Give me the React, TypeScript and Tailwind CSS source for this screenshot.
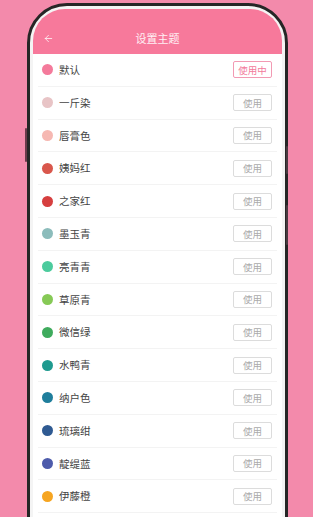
import { ArrowLeft } from "lucide-react";

const themes = [
  { name: "默认", color: "#f47a9b", active: true },
  { name: "一斤染", color: "#e8c4c6" },
  { name: "唇膏色", color: "#f6b8b2" },
  { name: "姨妈红", color: "#d9574c" },
  { name: "之家红", color: "#d63f3f" },
  { name: "墨玉青", color: "#8cbcbb" },
  { name: "亮青青", color: "#4ccb9d" },
  { name: "草原青", color: "#86c956" },
  { name: "微信绿", color: "#3fab5d" },
  { name: "水鸭青", color: "#1f9a8f" },
  { name: "纳户色", color: "#1f7e9c" },
  { name: "琉璃绀", color: "#2f5a92" },
  { name: "靛缇蓝", color: "#4d5bab" },
  { name: "伊藤橙", color: "#f6a521" },
];

const App = () => {
  return (
    <div
      className="relative w-[313px] h-[517px] overflow-hidden bg-[#f38aab]"
      style={{ fontFamily: '"Noto Sans CJK SC", "Noto Sans", sans-serif' }}
    >
      {/* side buttons */}
      <div className="absolute left-[25px] top-[128px] w-[2px] h-[34px] rounded bg-[#6b3a4a]" />
      <div className="absolute left-[286px] top-[146px] w-[2px] h-[28px] rounded bg-[#4a3a40]" />
      <div className="absolute left-[286px] top-[205px] w-[2px] h-[40px] rounded bg-[#4a3a40]" />

      <div className="ml-[27px] mt-[3px] w-[261px] h-[580px] rounded-[40px] border-[3px] border-[#262626] bg-[#f4f4f4] p-[3px]">
        <div className="h-full rounded-t-[32px] overflow-hidden bg-white">
          <div className="bg-[#f7799b] pt-[14px]">
            <div className="relative h-[31px] flex items-center justify-center">
              <ArrowLeft className="absolute left-[10px] w-[11px] h-[11px] text-white/80" strokeWidth={2} />
              <span className="text-[11px] text-white/90">设置主题</span>
            </div>
          </div>
          <div className="px-[5px]">
            {themes.map((t) => (
              <div
                key={t.name}
                className="h-[32.8px] flex items-center border-b border-[#f3f3f3] pl-[4px] pr-[5px]"
              >
                <span
                  className="w-[11px] h-[11px] rounded-full"
                  style={{ backgroundColor: t.color }}
                />
                <span className="ml-[6px] text-[10.5px] text-[#444]">{t.name}</span>
                <span
                  className={
                    t.active
                      ? "ml-auto w-[39px] h-[17px] flex items-center justify-center border border-[#f29ab3] text-[9.5px] text-[#f27a9a] rounded-[2px]"
                      : "ml-auto w-[39px] h-[17px] flex items-center justify-center border border-[#dcdcdc] text-[9.5px] text-[#aaa] rounded-[2px]"
                  }
                >
                  {t.active ? "使用中" : "使用"}
                </span>
              </div>
            ))}
          </div>
        </div>
      </div>
    </div>
  );
};

export default App;
